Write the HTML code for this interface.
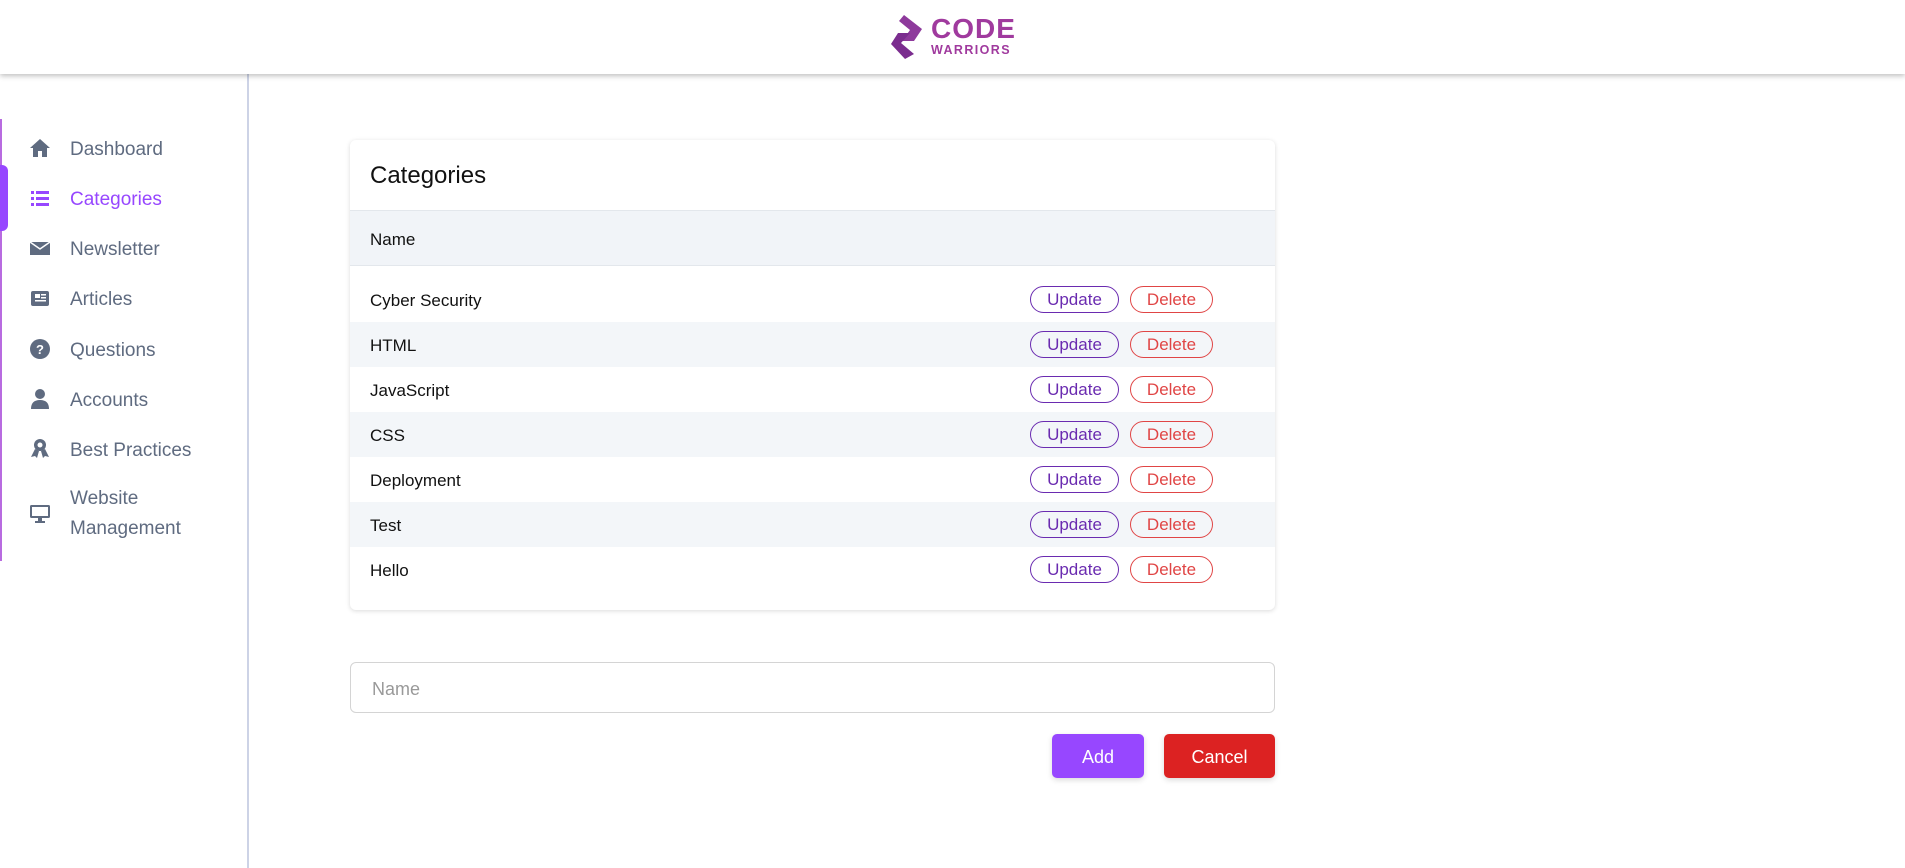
<!DOCTYPE html>
<html><head><meta charset="utf-8"><style>
*{box-sizing:border-box;margin:0;padding:0}
body{width:1905px;height:868px;overflow:hidden;background:#fff;font-family:"Liberation Sans",sans-serif;position:relative}
.hdr{position:absolute;left:0;top:0;width:1905px;height:74px;background:#fff;box-shadow:0 2px 5px rgba(0,0,0,.25);z-index:2}
.side{position:absolute;left:0;top:74px;width:249px;height:794px;border-right:2px solid #cdd3e6}
.vline{position:absolute;left:0;top:119px;width:2px;height:442px;background:#b86be0}
.act{position:absolute;left:0;top:165px;width:8px;height:66px;background:#9747ff;border-radius:0 6px 6px 0}
.nav{position:absolute;left:70px;font-size:19px;color:#5f6b80}
.ic{position:absolute;left:29px;width:22px;height:22px}
.card{position:absolute;left:350px;top:140px;width:925px;height:470px;border-radius:6px;box-shadow:0 1px 5px rgba(0,0,0,.15);background:#fff;overflow:hidden}
.title{position:absolute;left:20px;top:22px;font-size:24px;color:#111}
.th{position:absolute;left:0;top:70px;width:925px;height:56px;background:#f1f4f8;border-top:1px solid #e3e7ec;border-bottom:1px solid #e3e7ec}
.th span{position:absolute;left:20px;top:19px;font-size:17px;color:#111}
.row{position:absolute;left:0;width:925px;height:45px}
.row.s{background:#f3f6f9}
.row .n{position:absolute;left:20px;top:14px;font-size:17px;color:#111}
.b{position:absolute;top:9px;height:27px;border-radius:14px;font-size:17px;text-align:center;line-height:26px;border:1px solid}
.u{left:680px;width:89px;color:#6a2bb0;border-color:#6a2bb0}
.d{left:780px;width:83px;color:#e04545;border-color:#e04545}
.inp{position:absolute;left:350px;top:662px;width:925px;height:51px;border:1px solid #d4d4d4;border-radius:6px}
.inp span{position:absolute;left:21px;top:16px;font-size:18px;color:#999}
.btn{position:absolute;top:734px;height:44px;border-radius:5px;color:#fff;font-size:18px;text-align:center;line-height:46px;box-shadow:0 2px 6px rgba(0,0,0,.15)}
</style></head><body>
<div class="hdr">
<svg style="position:absolute;left:888px;top:14px" width="40" height="46" viewBox="0 0 40 46">
<path d="M16 1 L34 15 L26 27 L14 27 L22 16 L11 7 Z" fill="#8e3a9c"/>
<path d="M22 19 L10 19 L3 30 L17 45 L26 40 L13 29 Z" fill="#7b2d8f"/>
</svg>
<div style="position:absolute;left:931px;top:15px;font-size:28px;font-weight:bold;color:#a03a9e;letter-spacing:1px;line-height:28px">CODE</div>
<div style="position:absolute;left:931px;top:44px;font-size:12.5px;font-weight:bold;color:#a03a9e;line-height:13px;letter-spacing:1.4px">WARRIORS</div>
</div>
<div class="side"></div>
<div class="vline"></div><div class="act"></div>
<svg class="ic" style="top:137px" viewBox="0 0 22 22"><path d="M11 2 L1 11 L4 11 L4 20 L9 20 L9 14 L13 14 L13 20 L18 20 L18 11 L21 11 Z" fill="#5f6b80"/></svg>
<div class="nav" style="top:139px">Dashboard</div>
<svg class="ic" style="top:187px" viewBox="0 0 22 22"><g fill="#9747ff"><rect x="2" y="4" width="3" height="3"/><rect x="2" y="10" width="3" height="3"/><rect x="2" y="16" width="3" height="3"/><rect x="7" y="4" width="13" height="3"/><rect x="7" y="10" width="13" height="3"/><rect x="7" y="16" width="13" height="3"/></g></svg>
<div class="nav" style="top:189px;color:#9747ff">Categories</div>
<svg class="ic" style="top:237px" viewBox="0 0 22 22"><path d="M1 5 H21 V18 H1 Z" fill="#5f6b80"/><path d="M1 5 L11 12 L21 5" stroke="#fff" stroke-width="1.5" fill="none"/></svg>
<div class="nav" style="top:239px">Newsletter</div>
<svg class="ic" style="top:287px" viewBox="0 0 22 22"><rect x="2" y="4" width="18" height="15" rx="2" fill="#5f6b80"/><rect x="6" y="7" width="5" height="4" fill="#fff"/><rect x="12" y="7" width="5" height="1.5" fill="#fff"/><rect x="12" y="10" width="5" height="1.5" fill="#fff"/><rect x="6" y="13" width="11" height="1.5" fill="#fff"/></svg>
<div class="nav" style="top:289px">Articles</div>
<svg class="ic" style="top:338px" viewBox="0 0 22 22"><circle cx="11" cy="11" r="10" fill="#5f6b80"/><text x="11" y="16" font-size="13" font-weight="bold" fill="#fff" text-anchor="middle" font-family="Liberation Sans">?</text></svg>
<div class="nav" style="top:340px">Questions</div>
<svg class="ic" style="top:388px" viewBox="0 0 22 22"><circle cx="11" cy="6" r="5" fill="#5f6b80"/><path d="M2 21 Q2 12 11 12 Q20 12 20 21 Z" fill="#5f6b80"/></svg>
<div class="nav" style="top:390px">Accounts</div>
<svg class="ic" style="top:437px" viewBox="0 0 22 22"><circle cx="11" cy="8" r="6" fill="#5f6b80"/><circle cx="11" cy="8" r="2.5" fill="#fff"/><path d="M6 12 L2 20 L6 19 L8 21 L10 14 Z M16 12 L20 20 L16 19 L14 21 L12 14 Z" fill="#5f6b80"/></svg>
<div class="nav" style="top:440px">Best Practices</div>
<svg class="ic" style="top:502px" viewBox="0 0 22 22"><rect x="1" y="3" width="20" height="13" rx="1.5" fill="#5f6b80"/><rect x="3" y="5" width="16" height="9" fill="#fff"/><rect x="9" y="16" width="4" height="3" fill="#5f6b80"/><rect x="6" y="19" width="10" height="2" fill="#5f6b80"/></svg>
<div class="nav" style="top:484px;line-height:30px">Website<br>Management</div>

<div class="card">
<div class="title">Categories</div>
<div class="th"><span>Name</span></div>
<div class="row" style="top:137px"><span class="n">Cyber Security</span><span class="b u">Update</span><span class="b d">Delete</span></div>
<div class="row s" style="top:182px"><span class="n">HTML</span><span class="b u">Update</span><span class="b d">Delete</span></div>
<div class="row" style="top:227px"><span class="n">JavaScript</span><span class="b u">Update</span><span class="b d">Delete</span></div>
<div class="row s" style="top:272px"><span class="n">CSS</span><span class="b u">Update</span><span class="b d">Delete</span></div>
<div class="row" style="top:317px"><span class="n">Deployment</span><span class="b u">Update</span><span class="b d">Delete</span></div>
<div class="row s" style="top:362px"><span class="n">Test</span><span class="b u">Update</span><span class="b d">Delete</span></div>
<div class="row" style="top:407px"><span class="n">Hello</span><span class="b u">Update</span><span class="b d">Delete</span></div>
</div>
<div class="inp"><span>Name</span></div>
<div class="btn" style="left:1052px;width:92px;background:#9747ff">Add</div>
<div class="btn" style="left:1164px;width:111px;background:#dc2222">Cancel</div>
</body></html>
